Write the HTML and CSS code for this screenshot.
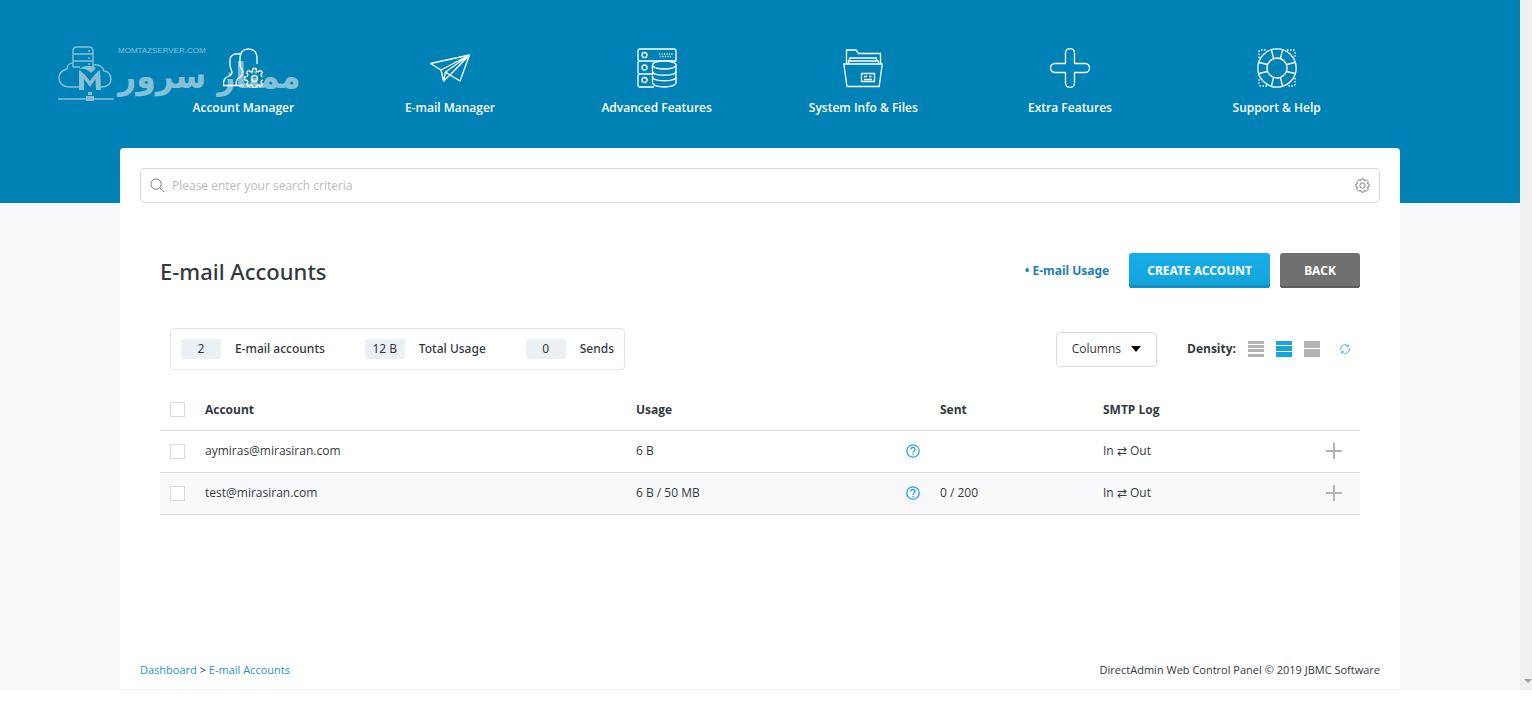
FILE: index.html
```html
<!DOCTYPE html>
<html lang="en">
<head>
  <meta charset="UTF-8">
  <meta name="viewport" content="width=device-width, initial-scale=1">
  <title>E-mail Accounts</title>
  <link rel="stylesheet" href="styles.css">
</head>
<body>
<div class="app">
  <div class="page">
    <header class="header">
      <a class="logo" href="#">
        <svg class="logo-mark" viewBox="0 0 56 58" width="56" height="58">
          <g fill="none" stroke="currentColor" stroke-width="1.4">
            <path d="M15 23V7q0-4 4-4h12q4 0 4 4v16M15 10h20M15 17h20M15 23h7"/>
            <path d="M21 43H11C5 43 1 39 1 34c0-5 4-8 8-9 0-4 3-6 6-6M43 43c6 0 10-3 10-8 0-4-3-8-7-8-1-4-5-7-11-6"/>
            <path d="M2 55h52"/>
          </g>
          <path fill="currentColor" d="M21 46V26q5 3 11 11 5-8 10-11l1 20h-5l-.5-11-5.500 8-6-8v11zM21 25q9-6 17-1l-5 5q-5-5-12-4zM30 48h4v3h-4zM28 52h8v5h-8z"/>
          <g fill="currentColor">
            <circle cx="31" cy="7" r="1"/><circle cx="31" cy="14" r="1"/><circle cx="31" cy="20" r="1"/>
            <circle cx="1" cy="55" r="1"/><circle cx="55" cy="55" r="1"/>
          </g>
        </svg>
        <span class="logo-text">
          <span class="logo-domain">MOMTAZSERVER.COM</span>
          <span class="logo-name" lang="fa" dir="rtl">ممتاز سرور</span>
        </span>
      </a>
      <nav class="nav">
        <a href="#">
          <svg viewBox="0 0 40 40"><path d="M17 6C12 5 7 7 7 12v6l2 6q0 3-3 4C2 29.500.5 31 .5 37.500H21M34 16v-5C34 4 31 1 25.500 1S17 4 17 11v6q0 3 3 6c0 4-1 5-3 6-3 1-4 4-4 8.500"/><path d="M30 20.500h3l.6 2.600 1.600.7 2.200-1.400 2 2-1.400 2.300.7 1.600 2.600.6v3l-2.600.6-.7 1.600 1.400 2.300-2 2-2.200-1.400-1.600.7-.6 2.300h-3l-.6-2.300-1.600-.7-2.300 1.400-2-2 1.400-2.300-.7-1.600-2.600-.6v-3l2.600-.6.7-1.600-1.400-2.300 2-2 2.300 1.400 1.600-.7z"/><circle cx="31.500" cy="30.500" r="3"/></svg>
          Account Manager
        </a>
        <a href="#">
          <svg viewBox="0 0 40 40"><path d="M.5 15.500L39.500 7 30 33l-10-6-6.500 6-2.500-11zM39.500 7L11 22M39.500 7L15.500 24l-2 9M39.500 7L20 27M15.500 24l4.500 3"/></svg>
          E-mail Manager
        </a>
        <a href="#">
          <svg viewBox="0 0 40 40"><path d="M39 13V3q0-2-2-2H3Q1 1 1 3v8q0 2 2 2h36V3M14.500 13H3q-2 0-2 2v9q0 2 2 2h12.500M3 26q-2 0-2 2v9q0 2 2 2h14"/><circle cx="7.500" cy="7" r="2.500"/><circle cx="7.500" cy="19.500" r="2.500"/><circle cx="7.500" cy="32" r="2.500"/><path class="solid" d="M15.500 17.500v17c0 6 23.500 6 23.500 0v-17z"/><ellipse class="solid" cx="27.300" cy="17" rx="11.800" ry="4"/><path d="M15.500 23.500c0 5 23.500 5 23.500 0M15.500 29c0 5 23.500 5 23.500 0"/><path stroke-dasharray="1 1.500" d="M22 6h14M23 8.500h12"/></svg>
          Advanced Features
        </a>
        <a href="#">
          <svg viewBox="0 0 40 40"><path d="M3.500 16V2H13l2.500 3.500h22V16M5.500 16v-3h30v3M6.500 13v-3h27v3M.8 16h38.400l-3 22.500H4z"/><path d="M18.500 25.500h13v8h-13zM21 31.500h8"/><path d="M21 28.500h3M26 28.500h2.500"/></svg>
          System Info &amp; Files
        </a>
        <a href="#">
          <svg viewBox="0 0 40 40"><path d="M15.500 15.500V5a4.500 4.500 0 0 1 9 0v10.500H35a4.500 4.500 0 0 1 0 9H24.500V35a4.500 4.500 0 0 1-9 0V24.500H5a4.500 4.500 0 0 1 0-9z"/></svg>
          Extra Features
        </a>
        <a href="#">
          <svg viewBox="0 0 40 40"><circle cx="20" cy="20" r="19.200"/><circle cx="20" cy="20" r="10"/><path d="M14.500 2l2 8.500M25.500 2l-2 8.500M14.500 38l2-8.500M25.500 38l-2-8.500M2 14.500l8.500 2M2 25.500l8.500-2M38 14.500l-8.500 2M38 25.500l-8.500-2"/><path stroke-dasharray="1.500 1.500" d="M2 10V4q0-2 2-2h6M30 2h6q2 0 2 2v6M38 30v6q0 2-2 2h-6M10 38H4q-2 0-2-2v-6"/></svg>
          Support &amp; Help
        </a>
      </nav>
    </header>

    <main class="panel">
      <form class="search">
        <svg class="icon" viewBox="0 0 16 16"><circle cx="6.500" cy="6.500" r="5.500"/><path d="M10.500 10.500L15 15"/></svg>
        <input type="search" placeholder="Please enter your search criteria" aria-label="Search">
        <button type="button" class="plain" aria-label="Search settings">
          <svg class="icon gear" viewBox="0 0 16 16"><circle cx="8" cy="8" r="2.800"/><path d="M6.500 1h3l.6 1.900 2-1 2 2-1 2 1.900.6v3l-1.900.6 1 2-2 2-2-1-.6 1.900h-3l-.6-1.900-2 1-2-2 1-2L1 9.500v-3l1.900-.6-1-2 2-2 2 1z"/></svg>
        </button>
      </form>

      <section class="content">
        <div class="title-row">
          <h1>E-mail Accounts</h1>
          <a class="usage-link" href="#">• E-mail Usage</a>
          <button type="button" class="btn btn-create">CREATE ACCOUNT</button>
          <button type="button" class="btn btn-back">BACK</button>
        </div>

        <div class="toolbar">
          <ul class="stats">
            <li><b>2</b>E-mail accounts</li>
            <li><b>12 B</b>Total Usage</li>
            <li><b>0</b>Sends</li>
          </ul>
          <button type="button" class="columns" aria-haspopup="true">Columns
            <svg viewBox="0 0 10 6" width="10" height="6"><path d="M0 0h10L5 6z"/></svg>
          </button>
          <div class="density">
            <span class="density-label">Density:</span>
            <button type="button" class="plain" aria-label="Compact">
              <svg viewBox="0 0 16 16"><path d="M0 0h16v3H0zM0 4h16v3H0zM0 8h16v3H0zM0 13h16v3H0z"/></svg>
            </button>
            <button type="button" class="plain active" aria-label="Normal">
              <svg viewBox="0 0 16 16"><path d="M0 0h16v4H0zM0 5h16v5H0zM0 11h16v5H0z"/></svg>
            </button>
            <button type="button" class="plain" aria-label="Comfortable">
              <svg viewBox="0 0 16 16"><path d="M0 0h16v7H0zM0 8h16v8H0z"/></svg>
            </button>
          </div>
          <button type="button" class="plain refresh" aria-label="Refresh">
            <svg viewBox="0 0 12 12" width="10" height="10"><path d="M1 7.500A5 5 0 0 1 9.500 2.500M11 4.500A5 5 0 0 1 2.500 9.500M7.500 3h2.500V.5M4.500 9H2v2.500"/></svg>
          </button>
        </div>

        <table class="accounts">
          <colgroup>
            <col class="c-check"><col><col class="c-usage"><col class="c-sent"><col class="c-log">
          </colgroup>
          <thead>
            <tr>
              <th><input type="checkbox" aria-label="Select all"></th>
              <th>Account</th>
              <th>Usage</th>
              <th>Sent</th>
              <th>SMTP Log</th>
            </tr>
          </thead>
          <tbody>
            <tr>
              <td><input type="checkbox" aria-label="Select aymiras@mirasiran.com"></td>
              <td>aymiras@mirasiran.com</td>
              <td>
                <div class="cell">6 B
                  <svg class="help" viewBox="0 0 14 14"><circle cx="7" cy="7" r="6.200"/><path d="M5 5.500a2 2 0 1 1 3 1.700Q7 7.800 7 8.700M7 10v1.200"/></svg>
                </div>
              </td>
              <td></td>
              <td>
                <div class="cell">In ⇄ Out
                  <button type="button" class="plain more" aria-label="More"><svg viewBox="0 0 16 16"><path d="M8 0v16M0 8h16"/></svg></button>
                </div>
              </td>
            </tr>
            <tr>
              <td><input type="checkbox" aria-label="Select test@mirasiran.com"></td>
              <td>test@mirasiran.com</td>
              <td>
                <div class="cell">6 B / 50 MB
                  <svg class="help" viewBox="0 0 14 14"><circle cx="7" cy="7" r="6.200"/><path d="M5 5.500a2 2 0 1 1 3 1.700Q7 7.800 7 8.700M7 10v1.200"/></svg>
                </div>
              </td>
              <td>0 / 200</td>
              <td>
                <div class="cell">In ⇄ Out
                  <button type="button" class="plain more" aria-label="More"><svg viewBox="0 0 16 16"><path d="M8 0v16M0 8h16"/></svg></button>
                </div>
              </td>
            </tr>
          </tbody>
        </table>
      </section>

      <footer class="footer">
        <div><a href="#">Dashboard</a> &gt; <a href="#">E-mail Accounts</a></div>
        <div>DirectAdmin Web Control Panel © 2019 JBMC Software</div>
      </footer>
    </main>
  </div>
  <div class="scrollbar">
    <svg viewBox="0 0 8 4" width="8" height="4"><path d="M0 0h8L4 4z"/></svg>
  </div>
</div>
</body>
</html>
```
FILE: styles.css
```css
* { box-sizing: border-box; }
body {
  margin: 0;
  background: #fff;
  color: #33393f;
  font: 12px/20px "Open Sans", "Noto Sans", sans-serif;
}
a { color: #2a93c9; text-decoration: none; }
button, input { font: inherit; color: inherit; }
button { cursor: pointer; }
svg { display: block; flex: none; }

.app {
  display: flex;
  min-height: calc(100vh - 30px);
}
.page {
  flex: 1;
  display: flex;
  flex-direction: column;
  min-width: 0;
  background: #f8f9fb;
}
.scrollbar {
  width: 12px;
  display: flex;
  flex-direction: column;
  justify-content: flex-end;
  align-items: flex-end;
  padding-bottom: 7px;
  background: #f0f0f0;
  fill: #a0a0a0;
  overflow: hidden;
}

/* header */
.header {
  position: relative;
  padding: 48px 0 85px;
  background: #0082b7;
}
.nav {
  display: grid;
  grid-template-columns: repeat(6, 1fr);
  width: 100%;
  max-width: 1280px;
  margin: 0 auto;
  padding: 0 20px;
}
.nav a {
  position: relative;
  display: flex;
  flex-direction: column;
  align-items: center;
  gap: 10px;
  color: #fff;
  font-weight: 600;
}
.nav svg {
  width: 40px;
  height: 40px;
  fill: none;
  stroke: #fff;
  stroke-width: 1.3;
  stroke-linejoin: round;
}
.nav .solid { fill: #0082b7; }
.logo {
  position: absolute;
  left: 58px;
  top: 44px;
  display: flex;
  gap: 4px;
  color: #85c0d6;
}
.logo-text {
  display: flex;
  flex-direction: column;
}
.logo-domain {
  font: 8px/14px "Liberation Sans", sans-serif;
}
.logo-name {
  font: bold 35px/36px "DejaVu Sans Condensed", "DejaVu Sans", sans-serif;
  white-space: nowrap;
}

/* panel */
.panel {
  flex: 1;
  display: flex;
  flex-direction: column;
  position: relative;
  width: 100%;
  max-width: 1280px;
  margin: -55px auto 0;
  padding: 20px 20px 9px;
  background: #fff;
  border-bottom: 1px solid #f3f3f5;
  border-radius: 4px 4px 0 0;
}
.search {
  display: flex;
  align-items: center;
  gap: 7px;
  height: 35px;
  padding: 0 9px;
  border: 1px solid #dcdcdc;
  border-radius: 4px;
}
.search input {
  flex: 1;
  padding: 0;
  border: 0;
  outline: 0;
  background: none;
}
.search input::placeholder { color: #b9bbbd; }
.icon {
  width: 15px;
  height: 15px;
  fill: none;
  stroke: #777;
}
.plain {
  padding: 0;
  border: 0;
  background: none;
}

.content { padding: 50px 20px 0; }
.title-row {
  display: flex;
  align-items: center;
  font-family: "Noto Sans", sans-serif;
}
h1 {
  flex: 1;
  margin: 0;
  font-size: 22px;
  line-height: 34px;
  font-weight: 500;
}
.usage-link {
  margin-right: 20px;
  color: #1b80b3;
  font-weight: 700;
}
.btn {
  height: 35px;
  padding: 0 18px;
  border: 0;
  border-radius: 3px;
  color: #fff;
  font-weight: 700;
}
.btn-create {
  background: linear-gradient(#17ade6, #14a3db);
  box-shadow: inset 0 -3px #128fc2;
}
.btn-back {
  min-width: 80px;
  margin-left: 10px;
  background: #707070;
  box-shadow: inset 0 -2px #5c5c5c;
}

.toolbar {
  display: flex;
  align-items: center;
  margin: 40px 10px 20px;
}
.stats {
  display: flex;
  gap: 40px;
  margin: 0 auto 0 0;
  padding: 10px;
  border: 1px solid #e3e5e7;
  border-radius: 4px;
  font-family: "Noto Sans", sans-serif;
  font-weight: 500;
  list-style: none;
}
.stats li {
  display: flex;
  gap: 14px;
}
.stats b {
  width: 40px;
  border-radius: 3px;
  background: #ebf0f4;
  font-weight: 400;
  text-align: center;
}
.columns {
  display: flex;
  align-items: center;
  gap: 10px;
  height: 35px;
  padding: 0 15px;
  border: 1px solid #dcdcdc;
  border-radius: 4px;
  background: #fff;
}
.density {
  display: flex;
  align-items: center;
  gap: 12px;
  margin: 0 20px 0 30px;
  fill: #b3b3b3;
}
.density-label { font-weight: 700; }
.density svg {
  width: 16px;
  height: 16px;
}
.density .active { fill: #16a5dc; }
.refresh svg {
  fill: none;
  stroke: #2babdf;
}

/* table */
.accounts {
  width: 100%;
  table-layout: fixed;
  border-collapse: collapse;
}
.c-check { width: 35px; }
.c-usage { width: 304px; }
.c-sent { width: 163px; }
.c-log { width: 267px; }
.accounts th, .accounts td {
  height: 42px;
  padding: 0 10px;
  border-bottom: 1px solid #dcdcdc;
  text-align: left;
}
.accounts th {
  height: 40px;
  font-weight: 700;
}
.accounts tbody tr:nth-child(even) { background: #f9f9fb; }
.accounts input {
  display: block;
  appearance: none;
  width: 15px;
  height: 15px;
  margin: 0;
  border: 1px solid #d9dbdd;
  background: #fff;
}
.cell {
  display: flex;
  align-items: center;
  justify-content: space-between;
}
.help {
  width: 14px;
  height: 14px;
  fill: none;
  stroke: #1fa5d8;
  stroke-width: 1.3;
}
.more { margin-right: 8px; }
.more svg {
  width: 16px;
  height: 16px;
  stroke: #b3b3b3;
  stroke-width: 2;
}

.footer {
  display: flex;
  justify-content: space-between;
  margin-top: auto;
  font-size: 11px;
}
```
